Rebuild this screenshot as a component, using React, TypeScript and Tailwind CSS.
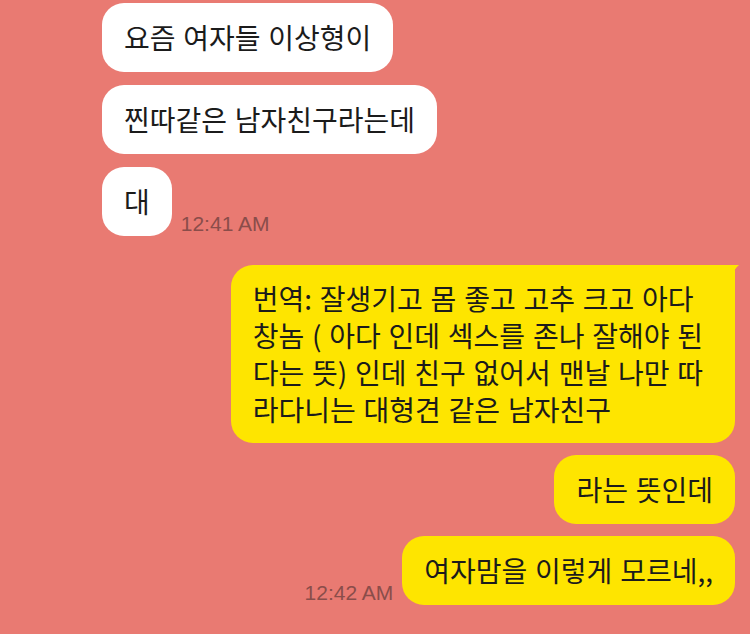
import React from "react";

const Time = ({ children }: { children: React.ReactNode }) => (
  <span className="text-[21px] leading-none text-[#8a4d4a] font-['Liberation_Sans',sans-serif] pb-[2px] whitespace-nowrap">
    {children}
  </span>
);

const LeftBubble = ({ children }: { children: React.ReactNode }) => (
  <div className="bg-white rounded-[22px] px-[22px] py-[16px] leading-[37px] text-[28px] [word-spacing:1.5px] text-[#1b1b1b] whitespace-nowrap">
    {children}
  </div>
);

const RightBubble = ({ children }: { children: React.ReactNode }) => (
  <div className="bg-[#fee500] rounded-[22px] px-[22px] py-[16px] leading-[37px] text-[28px] [word-spacing:1.5px] text-[#1b1b1b] whitespace-nowrap">
    {children}
  </div>
);

const App = () => {
  return (
    <div className="w-[750px] h-[634px] overflow-hidden bg-[#e97a72] font-['Noto_Sans_CJK_KR','Noto_Sans',sans-serif] pt-[3px]">
      <div className="flex flex-col gap-[13px] pl-[102px]">
        <div className="flex">
          <LeftBubble>요즘 여자들 이상형이</LeftBubble>
        </div>
        <div className="flex">
          <LeftBubble>찐따같은 남자친구라는데</LeftBubble>
        </div>
        <div className="flex items-end gap-[9px]">
          <LeftBubble>대</LeftBubble>
          <Time>12:41 AM</Time>
        </div>
      </div>

      <div className="flex flex-col items-end gap-[12px] pr-[15px] mt-[29px]">
        <div className="relative">
          <div className="bg-[#fee500] rounded-[22px] rounded-tr-[6px] pl-[22px] pr-[32px] py-[15px] leading-[37px] text-[28px] [word-spacing:1.5px] text-[#1b1b1b] whitespace-nowrap">
            번역: 잘생기고 몸 좋고 고추 크고 아다
            <br />
            창놈 ( 아다 인데 섹스를 존나 잘해야 된
            <br />
            다는 뜻) 인데 친구 없어서 맨날 나만 따
            <br />
            라다니는 대형견 같은 남자친구
          </div>
          <svg
            className="absolute -right-[4px] top-0"
            width="14"
            height="18"
            viewBox="0 0 14 18"
          >
            <path d="M0 0 L14 0 Q9 4 8 10 L8 18 L0 18 Z" fill="#fee500" />
          </svg>
        </div>
        <div className="flex">
          <RightBubble>라는 뜻인데</RightBubble>
        </div>
        <div className="flex items-end gap-[9px]">
          <Time>12:42 AM</Time>
          <RightBubble>여자맘을 이렇게 모르네,,</RightBubble>
        </div>
      </div>
    </div>
  );
};

export default App;
